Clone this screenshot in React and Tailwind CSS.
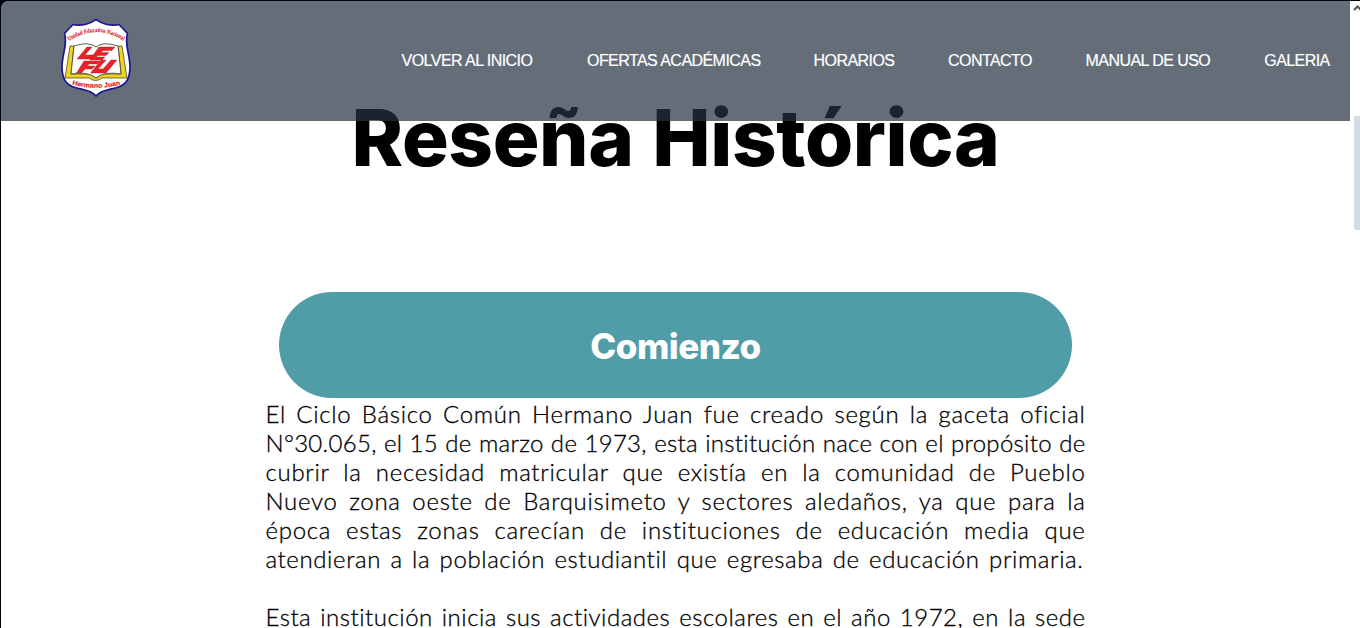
const links = [
  ["VOLVER AL INICIO", "w-[131px]"],
  ["OFERTAS ACADÉMICAS", "w-[172px]"],
  ["HORARIOS", "w-[80px]"],
  ["CONTACTO", "w-[83px]"],
  ["MANUAL DE USO", "w-[124px]"],
  ["GALERIA", "w-[66px]"],
];

const history = [
  ["El Ciclo Básico Común Hermano Juan fue creado según la gaceta oficial", "tracking-[0.7px]"],
  ["N°30.065, el 15 de marzo de 1973, esta institución nace con el propósito de", "tracking-[0.3px]"],
  ["cubrir la necesidad matricular que existía en la comunidad de Pueblo", "tracking-[0.7px]"],
  ["Nuevo zona oeste de Barquisimeto y sectores aledaños, ya que para la", "tracking-[0.7px]"],
  ["época estas zonas carecían de instituciones de educación media que", "tracking-[0.7px]"],
  ["atendieran a la población estudiantil que egresaba de educación primaria.", "mr-[2px] tracking-[0.6px]"],
];

function Crest() {
  return (
    <svg className="h-[80px] w-[72px]" viewBox="0 0 72 80" role="img" aria-label="Unidad Educativa Nacional Hermano Juan">
      <path
        d="M36 1.5C31 5 22 8.500 13 6.500L4.500 15.500C8 26 2 36 2 49C2 62 7 67 15 69.500C23 72 31 72 36 78C41 72 49 72 57 69.500C65 67 70 62 70 49C70 36 64 26 67.500 15.500L59 6.500C50 8.500 41 5 36 1.500Z"
        fill="#fff" stroke="#1b1594" strokeWidth="1.700" strokeLinejoin="round"
      />
      <path d="M10 28L5 60H29Q36 65 42 60H67L62 28H58L61 56H42L36 60L30 56H11L14 28Z" fill="#efd321" stroke="#3c3827" strokeWidth=".7" />
      <path d="M14 28Q29 23 36 29Q43 23 58 28L61 56Q44 53 36 60Q28 53 11 56Z" fill="#fffefa" stroke="#3c3827" strokeWidth=".8" />
      <g fill="#ed2028" stroke="#8f1820" strokeWidth=".35">
        <path d="M27 29H32L25 37H35L31.500 41H17Z" />
        <path d="M39 29H55L52 32.500H43L41 34.500H49L46 37.500H38L36.500 39H45L42 42H29.500Z" />
        <path d="M24 43H40L37 46H29L27.500 48H35L32 51H25L21.500 55H16.500Z" />
        <path d="M41 42H46L38 51H43L51 42H57L46 55H30.500Z" />
      </g>
      <path id="crest-top" d="M9 23Q36 5 64 23" fill="none" />
      <path id="crest-bottom" d="M12 66.500Q36 73 61 66.500" fill="none" />
      <text className="font-['Liberation_Serif',serif] text-[6px] font-bold" fill="#dd2430" stroke="#dd2430" strokeWidth=".15">
        <textPath href="#crest-top" textLength="58" lengthAdjust="spacingAndGlyphs">Unidad Educativa Nacional</textPath>
      </text>
      <text className="font-['Liberation_Sans',sans-serif] text-[6.5px] font-bold" fill="#dd2430" stroke="#dd2430" strokeWidth=".2">
        <textPath href="#crest-bottom" textLength="49" lengthAdjust="spacingAndGlyphs">Hermano Juan</textPath>
      </text>
    </svg>
  );
}

function Header() {
  return (
    <header className="relative z-10 flex h-[120px] w-[1349px] items-start justify-between rounded-tl-[8px] bg-[#243141]/71 pr-[20px] pl-[59px]">
      <div className="pt-[17px]"><Crest /></div>
      <nav className="flex gap-[54.500px] pt-[50px] font-['Liberation_Sans',Arial,sans-serif] text-[16px] leading-[20px] tracking-[-0.55px] text-white [-webkit-text-stroke:0.2px_white]">
        {links.map(([label, width]) => (
          <a key={label} href="#" className={`${width} text-center whitespace-nowrap`}>{label}</a>
        ))}
      </nav>
    </header>
  );
}

export default function App() {
  return (
    <div className="flex h-[628px] w-[1360px] overflow-hidden border-t border-l border-[#02020e] bg-[#02020e] font-[Lato,sans-serif] text-black">
      <div className="w-[1349px] shrink-0 rounded-tl-[8px] bg-white">
        <Header />
        <main className="-mt-[120px] flex flex-col items-center">
          <h1 className="mt-[89px] flex h-[96px] w-[648px] justify-between font-[Inter,sans-serif] text-[78px] leading-[96px] font-extrabold tracking-[-0.4px] whitespace-nowrap">
            <span>Reseña</span><span>Histórica</span>
          </h1>
          <h2 className="mt-[106px] h-[106px] w-[793px] rounded-full bg-[#509da7] text-center font-[Inter,sans-serif] text-[35px] leading-[108px] font-extrabold tracking-[-0.5px] text-white">
            Comienzo
          </h2>
          <section className="mt-[1px] w-[820px] text-[24px] leading-[29px] font-light [-webkit-text-stroke:0.3px_black]">
            <p>
              {history.map(([line, tracking]) => (
                <span key={line} className={`block [text-align-last:justify] whitespace-nowrap ${tracking}`}>{line}</span>
              ))}
            </p>
            <p className="mt-[29px] [text-align-last:justify] tracking-[0.5px] whitespace-nowrap">
              Esta institución inicia sus actividades escolares en el año 1972, en la sede
            </p>
          </section>
        </main>
      </div>
      <aside className="flex flex-1 flex-col items-end bg-white">
        <svg className="mt-[3px] h-[8px] w-[7px]" viewBox="0 0 7 8"><path d="M1 6L4.500 2.500L8 6" fill="none" stroke="#555" strokeWidth="2" /></svg>
        <div className="mt-[104px] h-[114px] w-[6px] rounded-l-[2px] bg-[#d2dbe4]" />
      </aside>
    </div>
  );
}
